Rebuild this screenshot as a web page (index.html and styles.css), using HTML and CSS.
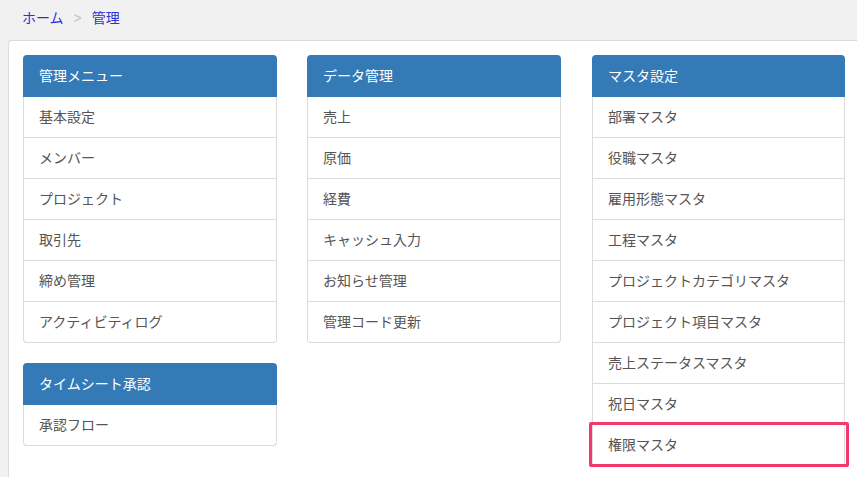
FILE: index.html
```html
<!DOCTYPE html>
<html lang="ja">
<head>
<meta charset="utf-8">
<title>管理</title>
<link rel="stylesheet" href="styles.css">
</head>
<body>
<nav class="breadcrumb">
  <a class="crumb" href="#">ホーム</a>
  <span class="sep">&gt;</span>
  <a class="crumb" href="#">管理</a>
</nav>
<main class="content">
  <div class="grid">
    <div class="column">
      <section class="panel">
        <div class="panel-heading">管理メニュー</div>
        <ul class="list">
          <li class="item">基本設定</li>
          <li class="item">メンバー</li>
          <li class="item">プロジェクト</li>
          <li class="item">取引先</li>
          <li class="item">締め管理</li>
          <li class="item">アクティビティログ</li>
        </ul>
      </section>
      <section class="panel">
        <div class="panel-heading">タイムシート承認</div>
        <ul class="list">
          <li class="item">承認フロー</li>
        </ul>
      </section>
    </div>
    <div class="column">
      <section class="panel">
        <div class="panel-heading">データ管理</div>
        <ul class="list">
          <li class="item">売上</li>
          <li class="item">原価</li>
          <li class="item">経費</li>
          <li class="item">キャッシュ入力</li>
          <li class="item">お知らせ管理</li>
          <li class="item">管理コード更新</li>
        </ul>
      </section>
    </div>
    <div class="column column-last">
      <section class="panel panel-last">
        <div class="panel-heading">マスタ設定</div>
        <ul class="list">
          <li class="item">部署マスタ</li>
          <li class="item">役職マスタ</li>
          <li class="item">雇用形態マスタ</li>
          <li class="item">工程マスタ</li>
          <li class="item">プロジェクトカテゴリマスタ</li>
          <li class="item">プロジェクト項目マスタ</li>
          <li class="item">売上ステータスマスタ</li>
          <li class="item">祝日マスタ</li>
          <li class="item item-highlight">権限マスタ</li>
        </ul>
      </section>
    </div>
  </div>
</main>
</body>
</html>
```
FILE: styles.css
```css
html, body {
  margin: 0;
  padding: 0;
  height: 100%;
  overflow: hidden;
}
body {
  background: #f1f1f1;
  font-family: "Helvetica Neue", "Liberation Sans", "Noto Sans CJK JP", sans-serif;
  font-size: 14px;
  line-height: 20px;
  color: #555;
  display: flex;
  flex-direction: column;
}
.breadcrumb {
  display: flex;
  align-items: center;
  height: 20px;
  padding: 8px 0 12px 22px;
  flex: none;
}
.crumb {
  color: #3030d8;
  text-decoration: none;
}
.sep {
  color: #c4c4c4;
  margin: 0 10px;
}
.content {
  flex: 1;
  margin-left: 8px;
  background: #fff;
  border: 1px solid #dcdcdc;
  border-right: none;
  border-bottom: none;
  border-radius: 4px 0 0 0;
  padding: 14px 0 0 14px;
  overflow: hidden;
}
.grid {
  display: grid;
  grid-template-columns: 254px 254px 254px;
  column-gap: 30px;
}
.column-last {
  margin-left: 1px;
}
.panel {
  margin-bottom: 20px;
}
.panel-last {
  margin-bottom: 0;
}
.panel-heading {
  height: 42px;
  box-sizing: border-box;
  padding: 11px 16px;
  background: #337ab7;
  color: #fff;
  border-radius: 4px 4px 0 0;
}
.list {
  list-style: none;
  margin: 0;
  padding: 0;
  border: 1px solid #dcdcdc;
  border-top: none;
  border-radius: 0 0 4px 4px;
}
.item {
  height: 40px;
  box-sizing: border-box;
  padding: 10px 15px;
}
.item + .item {
  height: 41px;
  border-top: 1px solid #dcdcdc;
}
.item-highlight {
  position: relative;
}
.item-highlight::after {
  content: "";
  position: absolute;
  left: -4px;
  right: -5px;
  top: -3px;
  bottom: -2px;
  border: 3px solid #f2386c;
  border-radius: 2px;
}
```
